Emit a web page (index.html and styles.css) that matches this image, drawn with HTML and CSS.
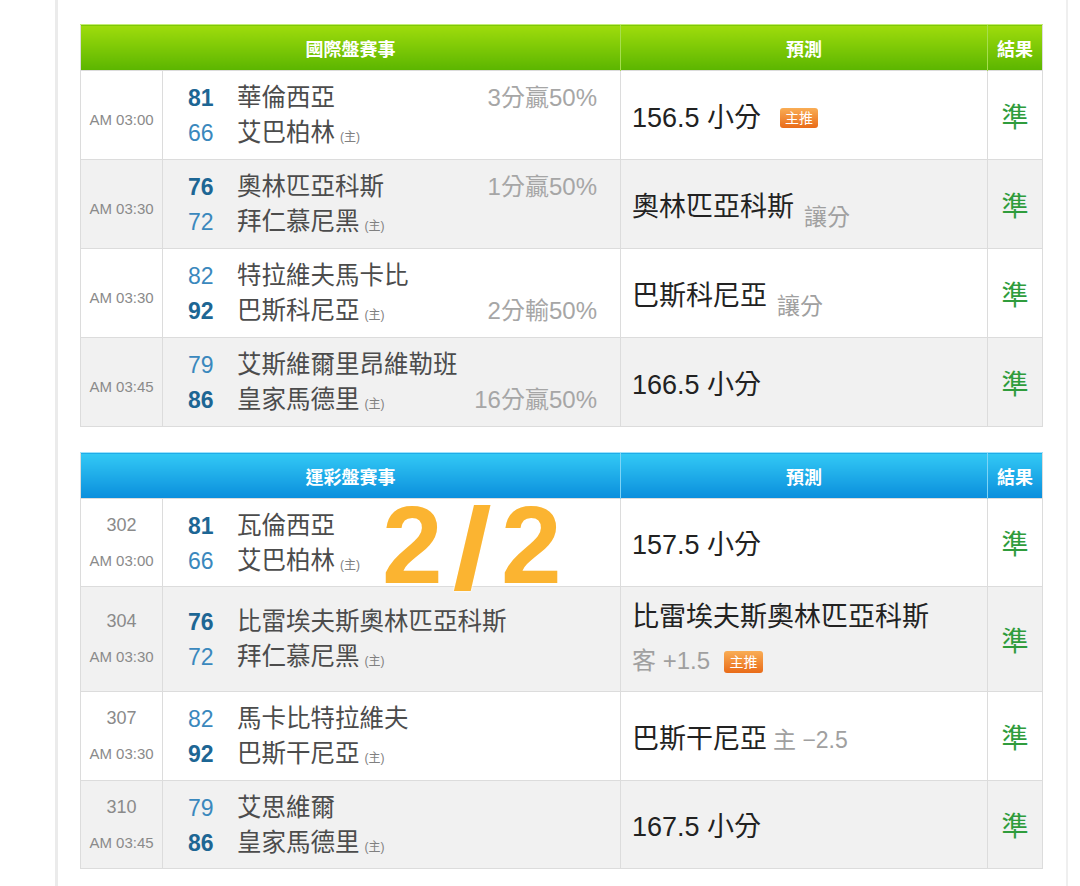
FILE: index.html
```html
<!DOCTYPE html>
<html lang="zh-Hant">
<head>
<meta charset="utf-8">
<title>賽事預測</title>
<link rel="stylesheet" href="styles.css">
</head>
<body>
<div class="page">
  <div class="board">
    <table class="games green">
      <colgroup><col class="c-time"><col class="c-game"><col class="c-pred"><col class="c-res"></colgroup>
      <thead>
        <tr><th colspan="2">國際盤賽事</th><th>預測</th><th>結果</th></tr>
      </thead>
      <tbody>
        <tr>
          <td class="time single"><div class="clock">AM 03:00</div></td>
          <td class="game">
            <div class="line"><span class="num win">81</span><span class="name">華倫西亞</span><span class="stat">3分贏50%</span></div>
            <div class="line"><span class="num">66</span><span class="name">艾巴柏林</span><span class="home">(主)</span></div>
          </td>
          <td class="pred"><span class="main">156.5 小分</span><span class="badge">主推</span></td>
          <td class="res">準</td>
        </tr>
        <tr class="alt">
          <td class="time single"><div class="clock">AM 03:30</div></td>
          <td class="game">
            <div class="line"><span class="num win">76</span><span class="name">奧林匹亞科斯</span><span class="stat">1分贏50%</span></div>
            <div class="line"><span class="num">72</span><span class="name">拜仁慕尼黑</span><span class="home">(主)</span></div>
          </td>
          <td class="pred"><span class="main">奧林匹亞科斯</span><span class="sub low">讓分</span></td>
          <td class="res">準</td>
        </tr>
        <tr>
          <td class="time single"><div class="clock">AM 03:30</div></td>
          <td class="game">
            <div class="line"><span class="num">82</span><span class="name">特拉維夫馬卡比</span></div>
            <div class="line"><span class="num win">92</span><span class="name">巴斯科尼亞</span><span class="home">(主)</span><span class="stat">2分輸50%</span></div>
          </td>
          <td class="pred"><span class="main">巴斯科尼亞</span><span class="sub low">讓分</span></td>
          <td class="res">準</td>
        </tr>
        <tr class="alt">
          <td class="time single"><div class="clock">AM 03:45</div></td>
          <td class="game">
            <div class="line"><span class="num">79</span><span class="name">艾斯維爾里昂維勒班</span></div>
            <div class="line"><span class="num win">86</span><span class="name">皇家馬德里</span><span class="home">(主)</span><span class="stat">16分贏50%</span></div>
          </td>
          <td class="pred"><span class="main">166.5 小分</span></td>
          <td class="res">準</td>
        </tr>
      </tbody>
    </table>

    <div class="stack">
      <table class="games blue">
        <colgroup><col class="c-time"><col class="c-game"><col class="c-pred"><col class="c-res"></colgroup>
        <thead>
          <tr><th colspan="2">運彩盤賽事</th><th>預測</th><th>結果</th></tr>
        </thead>
        <tbody>
          <tr class="short">
            <td class="time"><div class="code">302</div><div class="clock">AM 03:00</div></td>
            <td class="game">
              <div class="line"><span class="num win">81</span><span class="name">瓦倫西亞</span></div>
              <div class="line"><span class="num">66</span><span class="name">艾巴柏林</span><span class="home">(主)</span></div>
            </td>
            <td class="pred"><span class="main">157.5 小分</span></td>
            <td class="res">準</td>
          </tr>
          <tr class="alt tall">
            <td class="time"><div class="code">304</div><div class="clock">AM 03:30</div></td>
            <td class="game">
              <div class="line"><span class="num win">76</span><span class="name">比雷埃夫斯奧林匹亞科斯</span></div>
              <div class="line"><span class="num">72</span><span class="name">拜仁慕尼黑</span><span class="home">(主)</span></div>
            </td>
            <td class="pred">
              <div class="pline"><span class="main">比雷埃夫斯奧林匹亞科斯</span></div>
              <div class="pline"><span class="sub">客 +1.5</span><span class="badge">主推</span></div>
            </td>
            <td class="res">準</td>
          </tr>
          <tr>
            <td class="time"><div class="code">307</div><div class="clock">AM 03:30</div></td>
            <td class="game">
              <div class="line"><span class="num">82</span><span class="name">馬卡比特拉維夫</span></div>
              <div class="line"><span class="num win">92</span><span class="name">巴斯干尼亞</span><span class="home">(主)</span></div>
            </td>
            <td class="pred"><span class="main">巴斯干尼亞</span><span class="sub tight">主 −2.5</span></td>
            <td class="res">準</td>
          </tr>
          <tr class="alt short">
            <td class="time"><div class="code">310</div><div class="clock">AM 03:45</div></td>
            <td class="game">
              <div class="line"><span class="num">79</span><span class="name">艾思維爾</span></div>
              <div class="line"><span class="num win">86</span><span class="name">皇家馬德里</span><span class="home">(主)</span></div>
            </td>
            <td class="pred"><span class="main">167.5 小分</span></td>
            <td class="res">準</td>
          </tr>
        </tbody>
      </table>
      <div class="stamp">2<span class="slash">/</span>2</div>
    </div>
  </div>
</div>
</body>
</html>
```

FILE: styles.css
```css
* { box-sizing: border-box; }

html, body {
  margin: 0;
  padding: 0;
  background: #ffffff;
}

body {
  font-family: "Liberation Sans", "Noto Sans CJK TC", sans-serif;
  color: #333;
}

.page {
  margin-left: 55px;
  width: 1013px;
  min-height: 886px;
  border-left: 3px solid #ebebeb;
  border-right: 2px solid #efefef;
  padding: 24px 24px 0 22px;
}

.board {
  display: flex;
  flex-direction: column;
  gap: 25px;
}

.stack {
  position: relative;
}

.games {
  width: 962px;
  table-layout: fixed;
  border-collapse: collapse;
  border: 1px solid #dcdcdc;
}

.c-time { width: 82px; }
.c-game { width: 458px; }
.c-pred { width: 367px; }
.c-res { width: 55px; }

.games th {
  height: 46px;
  padding: 0;
  color: #ffffff;
  font-size: 18px;
  font-weight: bold;
  text-align: center;
  vertical-align: middle;
}

.green th {
  background: linear-gradient(#9fdc0c, #5bb500);
  border-left: 1px solid #a6de4e;
  border-top: 1px solid #c4ec72;
}

.blue th {
  background: linear-gradient(#33c9f5, #0a8edc);
  border-left: 1px solid #7ed4f6;
  border-top: 1px solid #9fe2fb;
}

.games th:first-child { border-left: none; }

.games td {
  height: 89px;
  padding: 0;
  border: 1px solid #dcdcdc;
  vertical-align: middle;
  background: #ffffff;
}

.games tr.alt td { background: #f1f1f1; }

.games tr.short td { height: 88px; }

.games tr.tall td { height: 105px; }

.time {
  text-align: center;
  color: #8a8a8a;
}

.time.single { padding-top: 8px; }

.clock {
  font-size: 15px;
  line-height: 35px;
}

.code {
  font-size: 18px;
  line-height: 35px;
}

.game {
  padding: 0 23px 0 25px !important;
}

.line {
  display: flex;
  align-items: baseline;
  height: 35px;
  line-height: 35px;
}

.num {
  width: 27px;
  margin-right: 22px;
  font-size: 23px;
  color: #3a88bd;
}

.num.win {
  font-weight: bold;
  color: #1d6694;
}

.name {
  font-size: 24.5px;
  color: #4c4c4c;
}

.home {
  margin-left: 5px;
  font-size: 12px;
  color: #808080;
}

.stat {
  margin-left: auto;
  font-size: 24px;
  color: #a6a6a6;
}

.pred {
  padding: 0 0 0 11px !important;
  white-space: nowrap;
}

.pline {
  line-height: 43px;
  height: 43px;
}

.main {
  font-size: 27px;
  color: #222222;
}

.sub {
  margin-left: 10px;
  font-size: 23px;
  color: #a0a0a0;
}

.sub.low {
  position: relative;
  top: 9px;
}

.pline .sub {
  margin-left: 0;
  font-size: 24px;
}

.sub.tight { margin-left: 6px; }

.badge {
  display: inline-block;
  vertical-align: 4px;
  margin-left: 19px;
  width: 38px;
  height: 20px;
  line-height: 20px;
  border-radius: 3px;
  background: linear-gradient(#f9ad55, #e96b18);
  color: #ffffff;
  font-size: 14px;
  text-align: center;
}

.pline .badge {
  margin-left: 14px;
  width: 39px;
  height: 22px;
  line-height: 22px;
  vertical-align: 2px;
}

.res {
  text-align: center;
  font-size: 27px;
  color: #2f9c3c;
}

.stamp {
  position: absolute;
  left: 302px;
  top: 39px;
  font-size: 109px;
  line-height: 1;
  font-weight: bold;
  color: #fbb431;
  text-shadow: 0 0 2px #ffffff, 0 0 2px #ffffff;
  pointer-events: none;
}

.stamp .slash {
  display: inline-block;
  margin: 0 14px;
  transform: translateY(3px) scale(1.3, 1.06);
}
```
